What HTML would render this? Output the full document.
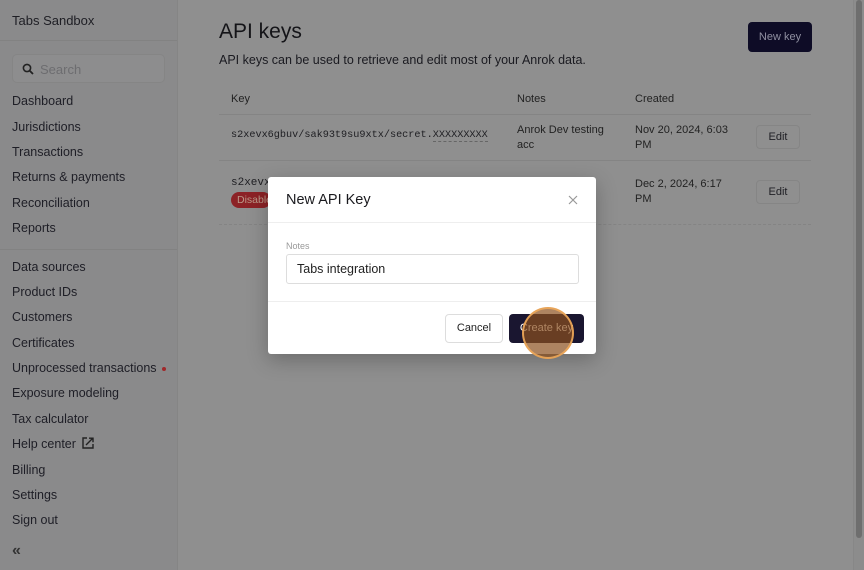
<!DOCTYPE html>
<html><head><meta charset="utf-8"><style>
*{box-sizing:border-box;margin:0;padding:0}
body{width:864px;height:570px;overflow:hidden;font-family:"Liberation Sans",sans-serif;background:#8f8f8f;position:relative;color:#1c1c22}
.sb{position:absolute;left:0;top:0;width:178px;height:570px;background:#8a8a8b;border-right:1px solid #858585}
.sb .hd{height:41px;border-bottom:1px solid #828282;padding:13px 12px;font-size:13px;color:#1e1e24}
.search{position:absolute;left:12px;top:54px;width:153px;height:29px;border:1px solid #858585;border-radius:5px;background:#8d8d8e;font-size:13px;color:#6d6d70;padding:7px 0 0 27px}
.nav{position:absolute;left:12px;font-size:12.5px;color:#1e1e26}
.sep{position:absolute;left:0;width:177px;top:249px;border-top:1px solid #828282}
h1{position:absolute;left:219px;top:20px;font-size:21px;font-weight:400;color:#141418}
.sub{position:absolute;left:219px;top:53px;font-size:12.5px;color:#1a1a20}
.nk{position:absolute;left:748px;top:22px;width:64px;height:30px;background:#0e0c26;border-radius:4px;color:#8f8fa0;font-size:11px;text-align:center;line-height:30px}
.th{position:absolute;top:93px;font-size:11px;color:#222}
.hl{position:absolute;left:219px;width:592px;border-top:1px solid #848484}
.mono{position:absolute;font-family:"Liberation Mono",monospace;font-size:10.2px;color:#1e1e22}
.t{position:absolute;font-size:11px;color:#222;line-height:15px}
.ed{position:absolute;left:756px;width:44px;height:24px;border:1px solid #858585;border-radius:4px;font-size:11px;text-align:center;line-height:22px;color:#1e1e24}
.modal{position:absolute;left:268px;top:177px;width:328px;height:177px;background:#fff;border-radius:3px;box-shadow:0 6px 20px rgba(0,0,0,.25)}
.scroll{position:absolute;left:853px;top:0;width:11px;height:570px;background:#8c8c8c;border-left:1px solid #878787}
.thumb{position:absolute;left:856px;top:0;width:6px;height:538px;background:#6e6e6e;border-radius:3px}
</style></head><body>
<div class="sb">
<div class="hd">Tabs Sandbox</div>
<div class="search"><svg style="position:absolute;left:9px;top:8px" width="12" height="12" viewBox="0 0 12 12"><circle cx="5" cy="5" r="3.6" fill="none" stroke="#222" stroke-width="1.6"/><path d="M7.6 7.6L11 11" stroke="#222" stroke-width="1.8"/></svg>Search</div>
<div class="nav" style="top:94px">Dashboard</div>
<div class="nav" style="top:120px">Jurisdictions</div>
<div class="nav" style="top:145px">Transactions</div>
<div class="nav" style="top:170px">Returns &amp; payments</div>
<div class="nav" style="top:196px">Reconciliation</div>
<div class="nav" style="top:221px">Reports</div>
<div class="sep"></div>
<div class="nav" style="top:260px">Data sources</div>
<div class="nav" style="top:285px">Product IDs</div>
<div class="nav" style="top:310px">Customers</div>
<div class="nav" style="top:336px">Certificates</div>
<div class="nav" style="top:361px">Unprocessed transactions <span style="display:inline-block;width:4px;height:4px;border-radius:50%;background:#a0282a;vertical-align:middle;margin-left:2px"></span></div>
<div class="nav" style="top:386px">Exposure modeling</div>
<div class="nav" style="top:412px">Tax calculator</div>
<div class="nav" style="top:437px">Help center <svg width="12" height="12" viewBox="0 0 12 12" style="vertical-align:-1px;margin-left:3px"><path d="M5 1H1v10h10V7" fill="none" stroke="#222" stroke-width="1.4"/><path d="M4 8L10.5 1.5M7 1.2h4v4" fill="none" stroke="#222" stroke-width="1.4"/></svg></div>
<div class="nav" style="top:463px">Billing</div>
<div class="nav" style="top:488px">Settings</div>
<div class="nav" style="top:513px">Sign out</div>
<div class="nav" style="top:542px;font-size:16px;font-weight:bold;color:#333">«</div>
</div>
<h1>API keys</h1>
<div class="sub">API keys can be used to retrieve and edit most of your Anrok data.</div>
<div class="nk">New key</div>
<div class="th" style="left:231px">Key</div>
<div class="th" style="left:517px">Notes</div>
<div class="th" style="left:635px">Created</div>
<div class="hl" style="top:114px"></div>
<div class="mono" style="left:231px;top:130px">s2xevx6gbuv/sak93t9su9xtx/secret.<span style="border-bottom:1px dashed #666">XXXXXXXXX</span></div>
<div class="t" style="left:517px;top:123px">Anrok Dev testing<br>acc</div>
<div class="t" style="left:635px;top:123px">Nov 20, 2024, 6:03<br>PM</div>
<div class="ed" style="top:125px">Edit</div>
<div class="hl" style="top:160px"></div>
<div class="mono" style="left:231px;top:177px;font-size:11px">s2xevx</div>
<div style="position:absolute;left:231px;top:192px;width:40px;height:16px;background:#8c2226;border-radius:8px;font-size:10.5px;color:#b98;padding:2px 0 0 6px">Disable</div>
<div class="t" style="left:635px;top:177px">Dec 2, 2024, 6:17<br>PM</div>
<div class="ed" style="top:180px">Edit</div>
<div class="hl" style="top:224px;border-top-style:dashed"></div>
<div class="scroll"></div><div class="thumb"></div>
<div class="modal">
<div style="position:absolute;left:18px;top:15px;font-size:14.5px;color:#1a1a1e">New API Key</div>
<svg style="position:absolute;left:300px;top:18px" width="10" height="10" viewBox="0 0 10 10"><path d="M1 1l8 8M9 1l-8 8" stroke="#999" stroke-width="1.2"/></svg>
<div style="position:absolute;left:0;top:45px;width:328px;border-top:1px solid #eee"></div>
<div style="position:absolute;left:18px;top:64px;font-size:9px;color:#999">Notes</div>
<div style="position:absolute;left:18px;top:77px;width:293px;height:30px;border:1px solid #ddd;border-radius:3px;font-size:12.5px;padding:7px 0 0 10px;color:#222">Tabs integration</div>
<div style="position:absolute;left:0;top:124px;width:328px;border-top:1px solid #eee"></div>
<div style="position:absolute;left:177px;top:137px;width:58px;height:29px;border:1px solid #ddd;border-radius:4px;font-size:11px;text-align:center;line-height:27px;color:#222">Cancel</div>
<div style="position:absolute;left:241px;top:137px;width:75px;height:29px;background:#1a1630;border-radius:4px;font-size:11px;text-align:center;line-height:29px;color:#fff">Create key</div>
<div style="position:absolute;left:254px;top:130px;width:52px;height:52px;border-radius:50%;background:rgba(140,80,30,.7);border:2px solid rgba(240,170,90,.9)"></div>
</div>
</body></html>
